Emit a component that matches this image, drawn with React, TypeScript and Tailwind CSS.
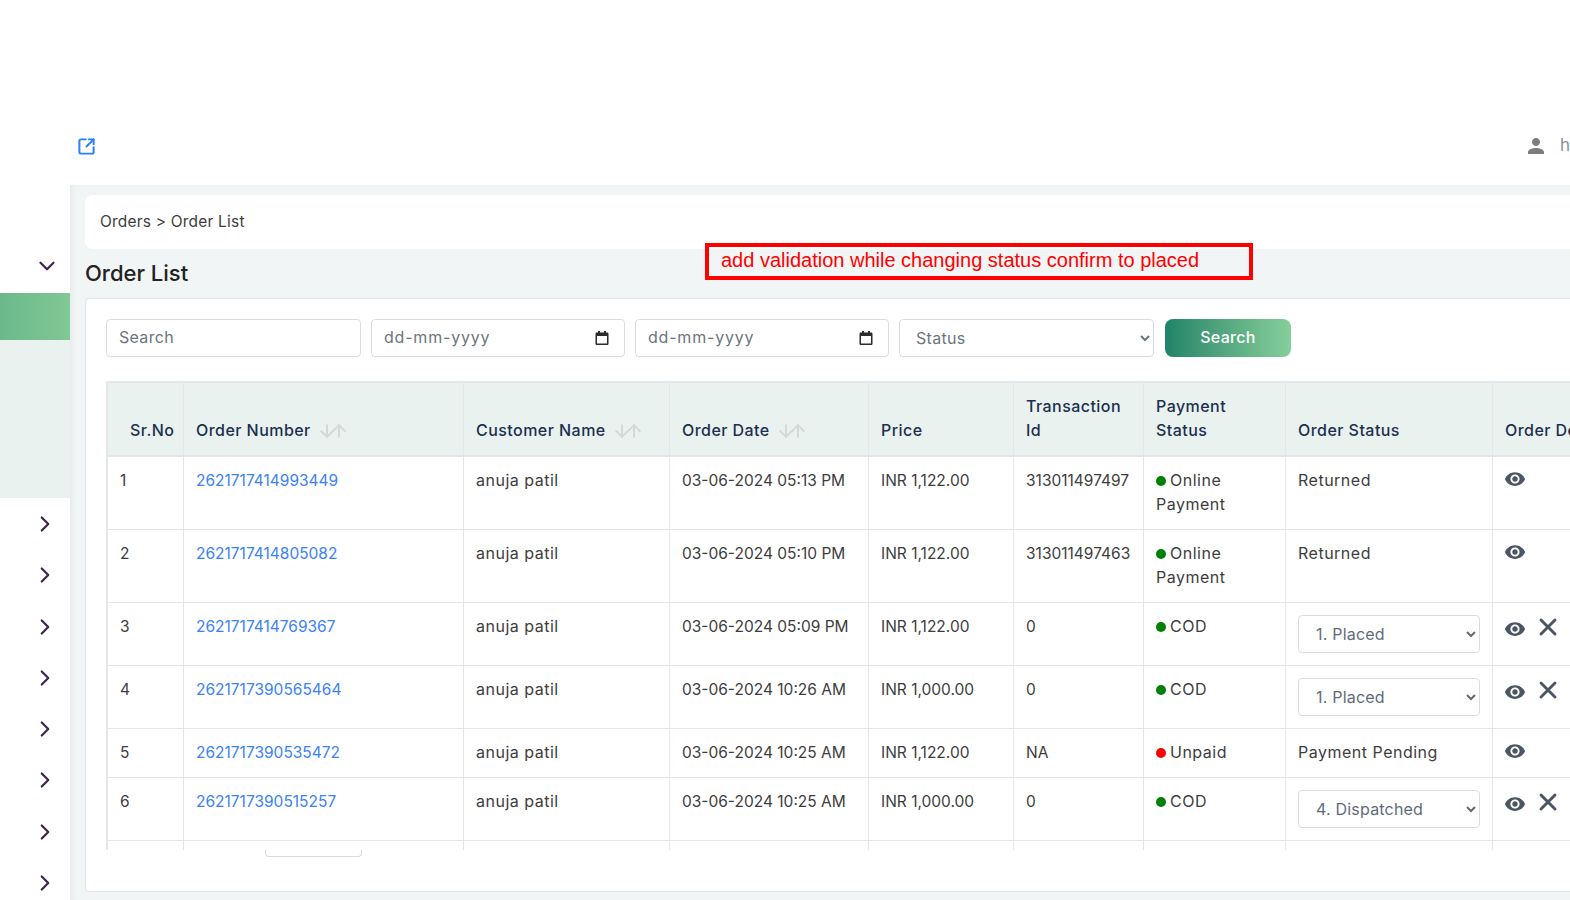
import React from 'react';
import { ChevronDown, ChevronRight, SquareArrowOutUpRight, ArrowDown, ArrowUp, X } from 'lucide-react';
import { MdPerson, MdRemoveRedEye } from 'react-icons/md';

type Row = {
  no: number;
  order: string;
  date: string;
  price: string;
  txn: string;
  pay: string;
  paid: boolean;
  status: string;
  select: boolean;
  rowClass: string;
};

const rows: Row[] = [
  { no: 1, order: '2621717414993449', date: '03-06-2024 05:13 PM', price: 'INR 1,122.00', txn: '313011497497', pay: 'Online Payment', paid: true, status: 'Returned', select: false, rowClass: 'h-[73px]' },
  { no: 2, order: '2621717414805082', date: '03-06-2024 05:10 PM', price: 'INR 1,122.00', txn: '313011497463', pay: 'Online Payment', paid: true, status: 'Returned', select: false, rowClass: 'h-[73px]' },
  { no: 3, order: '2621717414769367', date: '03-06-2024 05:09 PM', price: 'INR 1,122.00', txn: '0', pay: 'COD', paid: true, status: '1. Placed', select: true, rowClass: 'h-[63px]' },
  { no: 4, order: '2621717390565464', date: '03-06-2024 10:26 AM', price: 'INR 1,000.00', txn: '0', pay: 'COD', paid: true, status: '1. Placed', select: true, rowClass: 'h-[63px]' },
  { no: 5, order: '2621717390535472', date: '03-06-2024 10:25 AM', price: 'INR 1,122.00', txn: 'NA', pay: 'Unpaid', paid: false, status: 'Payment Pending', select: false, rowClass: 'h-[49px]' },
  { no: 6, order: '2621717390515257', date: '03-06-2024 10:25 AM', price: 'INR 1,000.00', txn: '0', pay: 'COD', paid: true, status: '4. Dispatched', select: true, rowClass: 'h-[63px]' },
];

const SortIcon = () => (
  <span className="ml-1.5 inline-flex align-[-5px] text-[#d4d8d8]">
    <ArrowDown size={20} strokeWidth={2.4} className="-mr-2" />
    <ArrowUp size={20} strokeWidth={2.4} />
  </span>
);

const CalendarIcon = () => (
  <svg width="16" height="16" viewBox="0 0 16 16" className="text-[#2b2b2b]">
    <path fill="currentColor" d="M4 1h2v1.5h4V1h2v1.5h1.2c.7 0 1.3.6 1.3 1.3v9.9c0 .7-.6 1.3-1.3 1.3H2.8c-.7 0-1.3-.6-1.3-1.3V3.8c0-.7.6-1.3 1.3-1.3H4V1zm-1 5v7.5h10V6H3z" />
  </svg>
);

const DateField = () => (
  <div className="flex h-[38px] w-[254px] items-center justify-between rounded border border-[#d8dce3] bg-white pl-3 pr-[14px] text-[16px] tracking-[0.8px] text-[#6c757d]">
    <span className="-mt-0.5">dd-mm-yyyy</span>
    <CalendarIcon />
  </div>
);

const th = 'border-r border-[#e3e6ea] px-3 pb-[13px] pt-[11px] text-left align-bottom text-[16px] font-medium leading-6 tracking-[0.45px] text-[#1c2f4f]';
const td = 'border-r border-b border-[#e3e6ea] px-3 align-top leading-6';
const plain = 'pt-3';
const wide = 'pt-[11px] text-[16px] tracking-[0.5px]';

export default function App() {
  return (
    <div className="relative flex h-[900px] w-[1570px] flex-col overflow-hidden bg-white text-[15.5px] text-[#3d3d3d]" style={{ fontFamily: 'Inter, "Open Sans", sans-serif' }}>
      <header className="flex h-[185px] shrink-0 items-center justify-between pl-[77px] pt-[107px]">
        <SquareArrowOutUpRight size={19} strokeWidth={2.5} className="text-[#2a7fff]" />
        <div className="flex w-[46px] items-center gap-3 overflow-hidden">
          <MdPerson size={24} className="shrink-0 text-[#7d7d7d]" />
          <span className="text-[17px] text-[#8a8fa0]">h</span>
        </div>
      </header>

      <div className="flex min-h-0 flex-1">
        <aside className="flex w-[70px] shrink-0 flex-col overflow-hidden">
          <div className="flex h-[108px] shrink-0 items-center justify-end pr-[10px] pt-[54px] text-[#3c2350]">
            <ChevronDown size={26} strokeWidth={2} />
          </div>
          <div className="h-[47px] shrink-0 bg-gradient-to-r from-[#6bb98a] to-[#80c895]" />
          <div className="h-[158px] shrink-0 bg-[#e9f2ef]" />
          <div className="flex flex-col pt-[13px] text-[#3c2350]">
            {[0, 1, 2, 3, 4, 5, 6, 7].map((i) => (
              <div key={i} className="flex h-[51.3px] shrink-0 items-start justify-end pr-3">
                <ChevronRight size={26} strokeWidth={2} />
              </div>
            ))}
          </div>
        </aside>

        <main className="min-w-0 flex-1 overflow-hidden bg-[#f1f5f6] pl-[15px] pt-2.5 shadow-[inset_6px_0_8px_-6px_rgba(0,0,0,0.08)]">
          <div className="flex h-[54px] w-[1500px] items-center rounded-l-lg bg-white pl-[15px] tracking-[0.2px] text-[#3d3d3d]">Orders &gt; Order List</div>
          <h1 className="mt-[10px] h-[39px] text-[22px] font-medium leading-[28px] text-[#222222]">Order List</h1>
          <section className="h-[594px] w-[1500px] rounded border border-[#e0e3e8] bg-white pl-5 pt-5">
            <div className="flex items-center gap-2.5">
              <input placeholder="Search" className="h-[38px] w-[255px] rounded border border-[#d8dce3] bg-white px-3 pb-0.5 text-[16px] tracking-[0.3px] outline-none placeholder:text-[#6c757d]" />
              <DateField />
              <DateField />
              <select defaultValue="Status" className="h-[38px] w-[255px] rounded border border-[#d8dce3] bg-white pl-3 text-[16px] tracking-[0.3px] text-[#6c757d] outline-none">
                <option>Status</option>
              </select>
              <button className="ml-px h-[38px] w-[126px] rounded-lg bg-gradient-to-r from-[#1f8468] to-[#86cf9b] pb-0.5 text-[16px] font-medium tracking-[0.3px] text-white">Search</button>
            </div>

            <div className="relative mt-6 h-[469px] w-[1480px] overflow-hidden">
              <table className="w-[1522px] table-fixed border-separate border-spacing-0 border-l-2 border-[#e3e6ea]">
                <colgroup>
                  <col className="w-[76px]" />
                  <col className="w-[280px]" />
                  <col className="w-[206px]" />
                  <col className="w-[199px]" />
                  <col className="w-[145px]" />
                  <col className="w-[130px]" />
                  <col className="w-[142px]" />
                  <col className="w-[207px]" />
                  <col className="w-[135px]" />
                </colgroup>
                <thead>
                  <tr className="h-[74px] bg-[#e9f2ef]">
                    <th className={`${th} border-y-2 pl-[22px]`}>Sr.No</th>
                    <th className={`${th} border-y-2`}>Order Number<SortIcon /></th>
                    <th className={`${th} border-y-2`}>Customer Name<SortIcon /></th>
                    <th className={`${th} border-y-2`}>Order Date<SortIcon /></th>
                    <th className={`${th} border-y-2`}>Price</th>
                    <th className={`${th} border-y-2`}>Transaction Id</th>
                    <th className={`${th} border-y-2`}>Payment Status</th>
                    <th className={`${th} border-y-2`}>Order Status</th>
                    <th className={`${th} border-y-2 whitespace-nowrap`}>Order Details</th>
                  </tr>
                </thead>
                <tbody>
                  {rows.map((r) => (
                    <tr key={r.no} className={r.rowClass}>
                      <td className={`${td} ${plain}`}>{r.no}</td>
                      <td className={`${td} ${plain}`}><a className="text-[#3b82f6]">{r.order}</a></td>
                      <td className={`${td} ${wide}`}>anuja patil</td>
                      <td className={`${td} ${plain}`}>{r.date}</td>
                      <td className={`${td} ${plain}`}>{r.price}</td>
                      <td className={`${td} ${plain}`}>{r.txn}</td>
                      <td className={`${td} ${wide}`}>
                        <span className={`mr-1 inline-block h-2.5 w-2.5 rounded-full ${r.paid ? 'bg-[#008000]' : 'bg-[#ff0000]'}`} />
                        {r.pay}
                      </td>
                      <td className={`${td} ${r.select ? 'pt-3 text-[16px] tracking-[0.2px]' : wide}`}>
                        {r.select ? (
                          <select defaultValue={r.status} className="h-[38px] w-[182px] rounded border border-[#d8dce3] bg-white pl-[13px] text-[#5f6b7a] outline-none">
                            <option>{r.status}</option>
                          </select>
                        ) : (
                          r.status
                        )}
                      </td>
                      <td className={`${td} ${plain}`}>
                        <div className={`flex items-start gap-2 text-[#4b5563] ${r.select ? '' : '-mt-px'}`}>
                          <MdRemoveRedEye size={22} className={r.select ? '-ml-px mt-[3px]' : '-ml-px'} />
                          {r.select && <X size={28} strokeWidth={2.5} className="-mt-0.5 text-[#4b5563]" />}
                        </div>
                      </td>
                    </tr>
                  ))}
                  <tr className="h-12">
                    {[0, 1, 2, 3, 4, 5, 6, 7, 8].map((i) => (
                      <td key={i} className="border-r border-[#e3e6ea]" />
                    ))}
                  </tr>
                </tbody>
              </table>
            </div>
            <div className="ml-[159px] h-[7px] w-[97px] rounded-b border border-t-0 border-[#d8dce3]" />
          </section>
        </main>
      </div>

      <div className="absolute left-[705px] top-[243px] flex h-[37px] w-[548px] items-center border-4 border-[#ff0000] pb-1 pl-3 text-[20px] text-[#ff0000]" style={{ fontFamily: '"Liberation Sans", Arial, sans-serif' }}>
        add validation while changing status confirm to placed
      </div>
    </div>
  );
}
